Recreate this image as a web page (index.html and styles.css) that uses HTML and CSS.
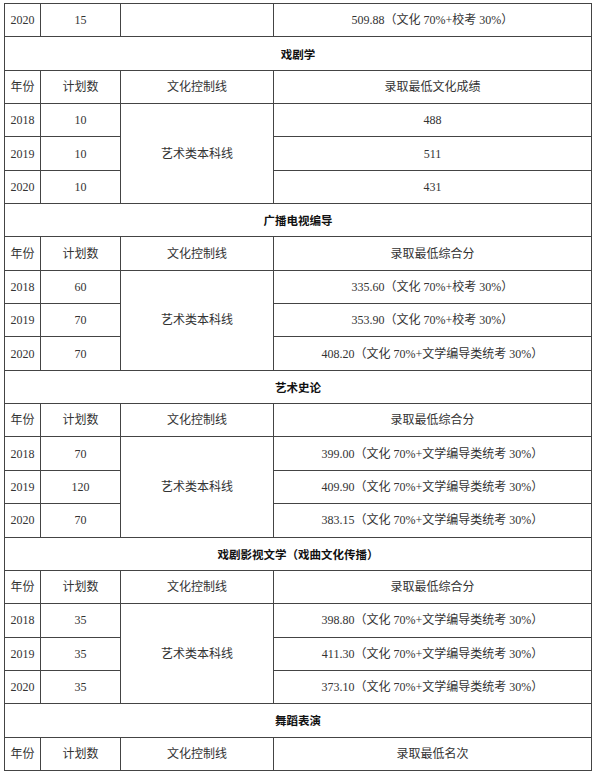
FILE: index.html
```html
<!DOCTYPE html>
<html lang="zh">
<head>
<meta charset="utf-8">
<link rel="stylesheet" href="styles.css">
</head>
<body>
<table class="score">
  <colgroup>
    <col class="c-year"><col class="c-plan"><col class="c-line"><col class="c-score">
  </colgroup>
  <tr><td>2020</td><td>15</td><td></td><td>509.88（文化 70%+校考 30%）</td></tr>

  <tr><td colspan="4" class="sec">戏剧学</td></tr>
  <tr><td>年份</td><td>计划数</td><td>文化控制线</td><td>录取最低文化成绩</td></tr>
  <tr><td>2018</td><td>10</td><td rowspan="3">艺术类本科线</td><td>488</td></tr>
  <tr><td>2019</td><td>10</td><td>511</td></tr>
  <tr><td>2020</td><td>10</td><td>431</td></tr>

  <tr><td colspan="4" class="sec">广播电视编导</td></tr>
  <tr><td>年份</td><td>计划数</td><td>文化控制线</td><td>录取最低综合分</td></tr>
  <tr><td>2018</td><td>60</td><td rowspan="3">艺术类本科线</td><td>335.60（文化 70%+校考 30%）</td></tr>
  <tr><td>2019</td><td>70</td><td>353.90（文化 70%+校考 30%）</td></tr>
  <tr><td>2020</td><td>70</td><td>408.20（文化 70%+文学编导类统考 30%）</td></tr>

  <tr><td colspan="4" class="sec">艺术史论</td></tr>
  <tr><td>年份</td><td>计划数</td><td>文化控制线</td><td>录取最低综合分</td></tr>
  <tr><td>2018</td><td>70</td><td rowspan="3">艺术类本科线</td><td>399.00（文化 70%+文学编导类统考 30%）</td></tr>
  <tr><td>2019</td><td>120</td><td>409.90（文化 70%+文学编导类统考 30%）</td></tr>
  <tr><td>2020</td><td>70</td><td>383.15（文化 70%+文学编导类统考 30%）</td></tr>

  <tr><td colspan="4" class="sec">戏剧影视文学（戏曲文化传播）</td></tr>
  <tr><td>年份</td><td>计划数</td><td>文化控制线</td><td>录取最低综合分</td></tr>
  <tr><td>2018</td><td>35</td><td rowspan="3">艺术类本科线</td><td>398.80（文化 70%+文学编导类统考 30%）</td></tr>
  <tr><td>2019</td><td>35</td><td>411.30（文化 70%+文学编导类统考 30%）</td></tr>
  <tr><td>2020</td><td>35</td><td>373.10（文化 70%+文学编导类统考 30%）</td></tr>

  <tr><td colspan="4" class="sec">舞蹈表演</td></tr>
  <tr><td>年份</td><td>计划数</td><td>文化控制线</td><td>录取最低名次</td></tr>
</table>
</body>
</html>
```

FILE: styles.css
```css
html, body {
  margin: 0;
  padding: 0;
  background: #ffffff;
}

body {
  font-family: "Liberation Serif", "Noto Sans CJK SC", serif;
  font-size: 12px;
  color: #333333;
}

.score {
  margin: 3px 0 0 4px;
  width: 588px;
  border-collapse: collapse;
  table-layout: fixed;
}

.c-year { width: 36px; }
.c-plan { width: 80px; }
.c-line { width: 153px; }
.c-score { width: auto; }

.score tr {
  height: 33.35px;
}

.score td {
  border: 1.5px solid #444444;
  padding: 0;
  text-align: center;
  vertical-align: middle;
  line-height: 14px;
  white-space: nowrap;
}

.score td.sec {
  font-family: "Noto Sans CJK SC", sans-serif;
  font-weight: 700;
  color: #111111;
  font-size: 11.5px;
}
```
